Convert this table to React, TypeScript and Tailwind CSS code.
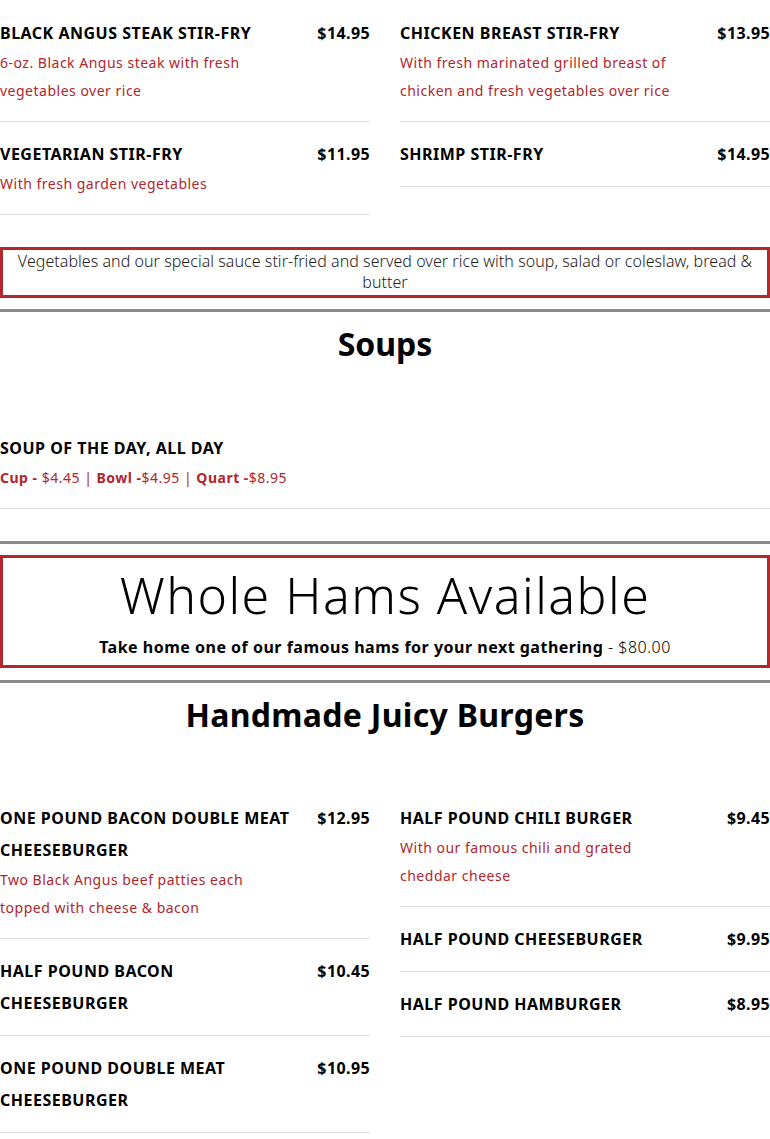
import React from 'react';

type Item = {
    name: string;
    price?: string;
    desc?: string;
};

const stirFryLeft: Item[] = [
    { name: 'BLACK ANGUS STEAK STIR-FRY', price: '$14.95', desc: '6-oz. Black Angus steak with fresh vegetables over rice' },
    { name: 'VEGETARIAN STIR-FRY', price: '$11.95', desc: 'With fresh garden vegetables' },
];

const stirFryRight: Item[] = [
    { name: 'CHICKEN BREAST STIR-FRY', price: '$13.95', desc: 'With fresh marinated grilled breast of chicken and fresh vegetables over rice' },
    { name: 'SHRIMP STIR-FRY', price: '$14.95' },
];

const burgersLeft: Item[] = [
    { name: 'ONE POUND BACON DOUBLE MEAT CHEESEBURGER', price: '$12.95', desc: 'Two Black Angus beef patties each topped with cheese & bacon' },
    { name: 'HALF POUND BACON CHEESEBURGER', price: '$10.45' },
    { name: 'ONE POUND DOUBLE MEAT CHEESEBURGER', price: '$10.95' },
];

const burgersRight: Item[] = [
    { name: 'HALF POUND CHILI BURGER', price: '$9.45', desc: 'With our famous chili and grated cheddar cheese' },
    { name: 'HALF POUND CHEESEBURGER', price: '$9.95' },
    { name: 'HALF POUND HAMBURGER', price: '$8.95' },
];

const MenuItem: React.FC<{ item: Item }> = ({ item }) => (
    <div className="flex justify-between py-4 border-b border-[#dddddd]">
        <div className="w-[292px]">
            <h3 className="text-[16px] leading-[32px] font-bold tracking-[0.5px] text-black">{item.name}</h3>
            {item.desc && (
                <p className="max-w-[278px] text-[14px] leading-[28px] tracking-[0.5px] text-[#b0262b]">{item.desc}</p>
            )}
        </div>
        <div className="flex-1 text-right text-[16px] leading-[32px] font-bold tracking-[0.4px] text-black">{item.price}</div>
    </div>
);

const Column: React.FC<{ items: Item[] }> = ({ items }) => (
    <div className="flex flex-col">
        {items.map((item) => (
            <MenuItem key={item.name} item={item} />
        ))}
    </div>
);

const Rule = () => <div className="h-[3px] bg-[#8a8a8a]" />;

export default function App() {
    return (
        <div className="w-[770px] bg-white pt-px text-black" style={{ fontFamily: '"Noto Sans", sans-serif' }}>
            {/* stir fry */}
            <div className="grid grid-cols-2 gap-x-[30px] items-start">
                <Column items={stirFryLeft} />
                <Column items={stirFryRight} />
            </div>

            <div className="mt-8 border-[3px] border-[#b2282c] pt-px pb-[2px] px-3 text-center text-[16px] leading-[21px] font-light tracking-[0.05px] text-[#222]">
                Vegetables and our special sauce stir-fried and served over rice with soup, salad or coleslaw, bread &amp; butter
            </div>

            <div className="mt-[11px]">
                <Rule />
            </div>

            {/* soups */}
            <h2 className="mt-2 text-center text-[32px] leading-[48px] font-bold">Soups</h2>
            <div className="mt-12 py-4 border-b border-[#dddddd]">
                <h3 className="text-[16px] leading-[32px] font-bold tracking-[0.5px]">SOUP OF THE DAY, ALL DAY</h3>
                <p className="text-[14px] leading-[28px] tracking-[0.5px] text-[#b0262b]">
                    <span className="font-bold">Cup - </span>$4.45 | <span className="font-bold">Bowl -</span>$4.95 |{' '}
                    <span className="font-bold">Quart -</span>$8.95
                </p>
            </div>

            <div className="mt-8">
                <Rule />
            </div>

            {/* hams */}
            <div className="mt-[11px] border-[3px] border-[#b2282c] pt-[7px] pb-[6px] text-center">
                <h2 className="text-[50px] leading-[60px] font-light tracking-[1.5px]">Whole Hams Available</h2>
                <p className="mt-[10px] text-[16px] leading-[24px] tracking-[0.5px]">
                    <span className="font-bold">Take home one of our famous hams for your next gathering</span>
                    <span className="font-light"> - $80.00</span>
                </p>
            </div>

            <div className="mt-3">
                <Rule />
            </div>

            {/* burgers */}
            <h2 className="mt-2 text-center text-[32px] leading-[48px] font-bold tracking-[0.3px]">Handmade Juicy Burgers</h2>
            <div className="mt-[47px] grid grid-cols-2 gap-x-[30px] items-start pb-2">
                <Column items={burgersLeft} />
                <Column items={burgersRight} />
            </div>
        </div>
    );
}
